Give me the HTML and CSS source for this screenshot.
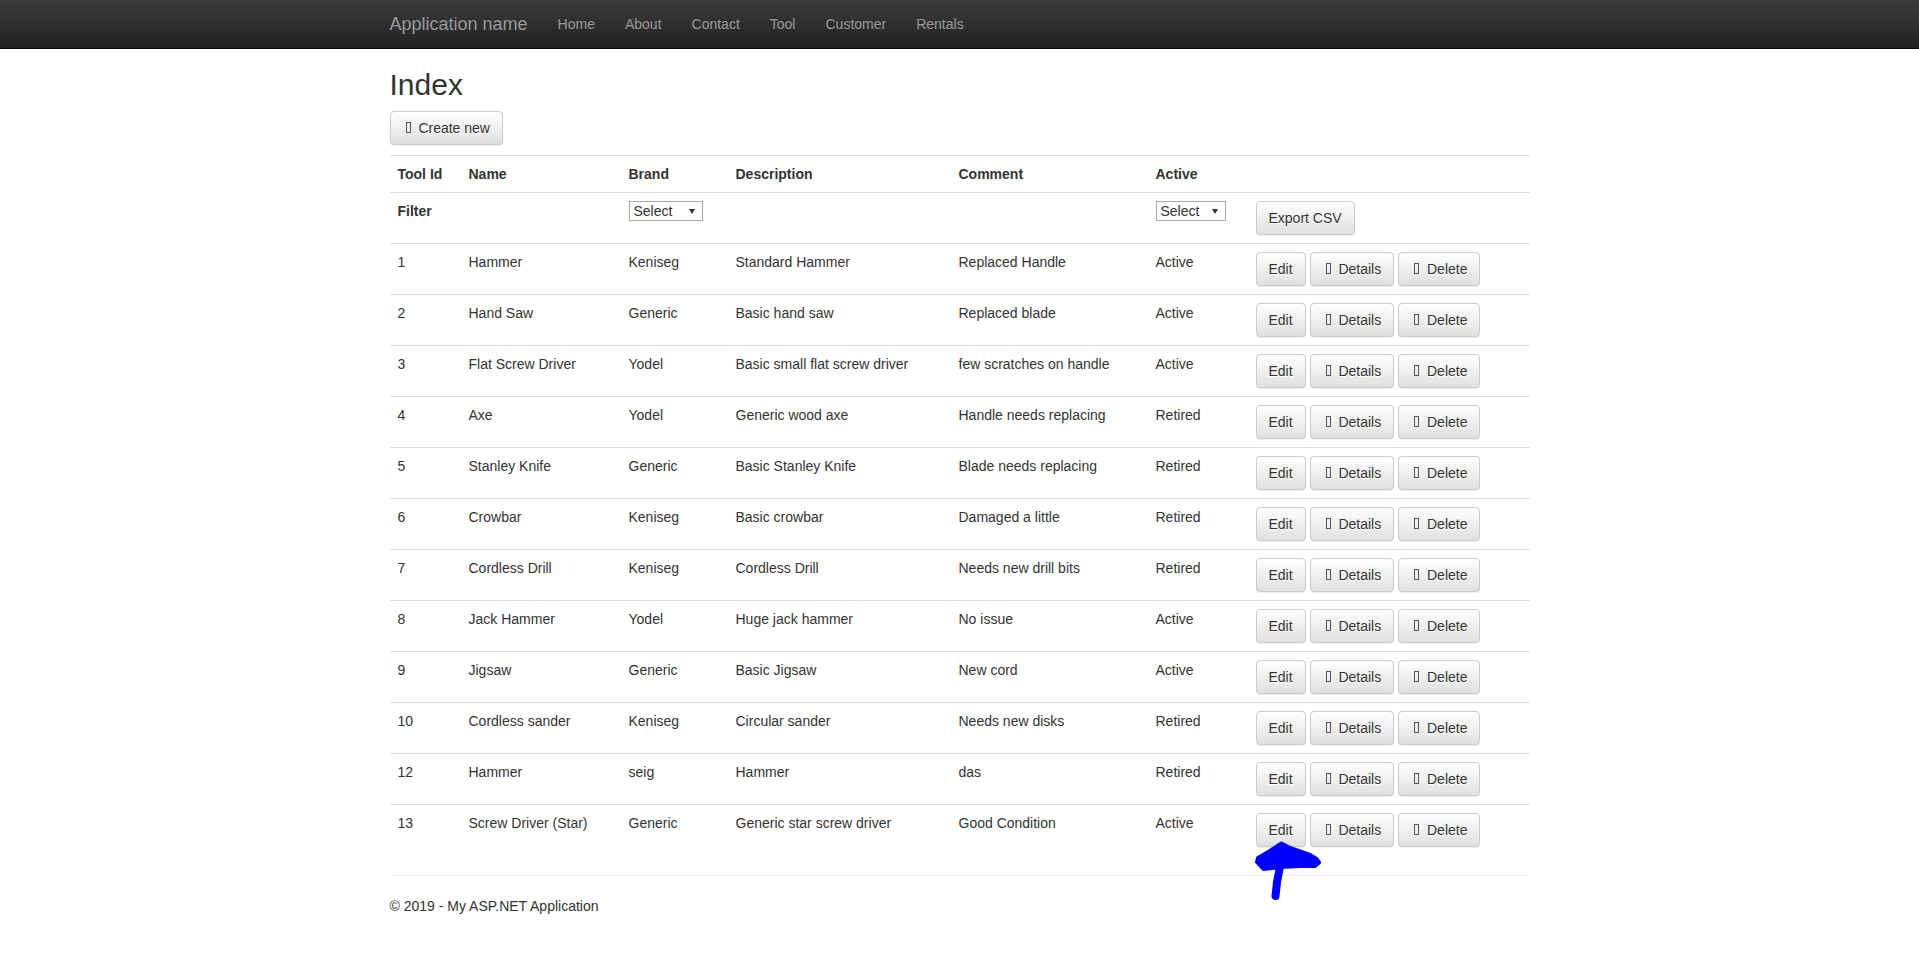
FILE: index.html
```html
<!DOCTYPE html>
<html lang="en">
<head>
<meta charset="utf-8">
<title>Index - My ASP.NET Application</title>
<link rel="stylesheet" href="styles.css">
</head>
<body>
<header class="navbar">
  <div class="container nav-inner">
    <a class="brand" href="#">Application name</a>
    <ul class="nav">
      <li><a href="#">Home</a></li>
      <li><a href="#">About</a></li>
      <li><a href="#">Contact</a></li>
      <li><a href="#">Tool</a></li>
      <li><a href="#">Customer</a></li>
      <li><a href="#">Rentals</a></li>
    </ul>
  </div>
</header>
<main class="container body-content">
  <h2 class="title">Index</h2>
  <p class="actions-top"><a class="btn" href="#"><span class="gi"></span> Create new</a></p>
  <table class="table">
    <colgroup>
      <col class="c-id"><col class="c-name"><col class="c-brand"><col class="c-desc"><col class="c-comment"><col class="c-active"><col class="c-act">
    </colgroup>
    <tbody>
      <tr><th>Tool Id</th><th>Name</th><th>Brand</th><th>Description</th><th>Comment</th><th>Active</th><th></th></tr>
      <tr>
        <th>Filter</th><th></th>
        <th><span class="sel sel-brand"><select><option>Select</option><option>Keniseg</option><option>Generic</option><option>Yodel</option></select></span></th>
        <th></th><th></th>
        <th><span class="sel sel-active"><select><option>Select</option><option>Active</option><option>Retired</option></select></span></th>
        <th><a class="btn" href="#">Export CSV</a></th>
      </tr>
      <tr><td>1</td><td>Hammer</td><td>Keniseg</td><td>Standard Hammer</td><td>Replaced Handle</td><td>Active</td><td><a class="btn" href="#">Edit</a> <a class="btn" href="#"><span class="gi"></span> Details</a> <a class="btn" href="#"><span class="gi"></span> Delete</a></td></tr>
      <tr><td>2</td><td>Hand Saw</td><td>Generic</td><td>Basic hand saw</td><td>Replaced blade</td><td>Active</td><td><a class="btn" href="#">Edit</a> <a class="btn" href="#"><span class="gi"></span> Details</a> <a class="btn" href="#"><span class="gi"></span> Delete</a></td></tr>
      <tr><td>3</td><td>Flat Screw Driver</td><td>Yodel</td><td>Basic small flat screw driver</td><td>few scratches on handle</td><td>Active</td><td><a class="btn" href="#">Edit</a> <a class="btn" href="#"><span class="gi"></span> Details</a> <a class="btn" href="#"><span class="gi"></span> Delete</a></td></tr>
      <tr><td>4</td><td>Axe</td><td>Yodel</td><td>Generic wood axe</td><td>Handle needs replacing</td><td>Retired</td><td><a class="btn" href="#">Edit</a> <a class="btn" href="#"><span class="gi"></span> Details</a> <a class="btn" href="#"><span class="gi"></span> Delete</a></td></tr>
      <tr><td>5</td><td>Stanley Knife</td><td>Generic</td><td>Basic Stanley Knife</td><td>Blade needs replacing</td><td>Retired</td><td><a class="btn" href="#">Edit</a> <a class="btn" href="#"><span class="gi"></span> Details</a> <a class="btn" href="#"><span class="gi"></span> Delete</a></td></tr>
      <tr><td>6</td><td>Crowbar</td><td>Keniseg</td><td>Basic crowbar</td><td>Damaged a little</td><td>Retired</td><td><a class="btn" href="#">Edit</a> <a class="btn" href="#"><span class="gi"></span> Details</a> <a class="btn" href="#"><span class="gi"></span> Delete</a></td></tr>
      <tr><td>7</td><td>Cordless Drill</td><td>Keniseg</td><td>Cordless Drill</td><td>Needs new drill bits</td><td>Retired</td><td><a class="btn" href="#">Edit</a> <a class="btn" href="#"><span class="gi"></span> Details</a> <a class="btn" href="#"><span class="gi"></span> Delete</a></td></tr>
      <tr><td>8</td><td>Jack Hammer</td><td>Yodel</td><td>Huge jack hammer</td><td>No issue</td><td>Active</td><td><a class="btn" href="#">Edit</a> <a class="btn" href="#"><span class="gi"></span> Details</a> <a class="btn" href="#"><span class="gi"></span> Delete</a></td></tr>
      <tr><td>9</td><td>Jigsaw</td><td>Generic</td><td>Basic Jigsaw</td><td>New cord</td><td>Active</td><td><a class="btn" href="#">Edit</a> <a class="btn" href="#"><span class="gi"></span> Details</a> <a class="btn" href="#"><span class="gi"></span> Delete</a></td></tr>
      <tr><td>10</td><td>Cordless sander</td><td>Keniseg</td><td>Circular sander</td><td>Needs new disks</td><td>Retired</td><td><a class="btn" href="#">Edit</a> <a class="btn" href="#"><span class="gi"></span> Details</a> <a class="btn" href="#"><span class="gi"></span> Delete</a></td></tr>
      <tr><td>12</td><td>Hammer</td><td>seig</td><td>Hammer</td><td>das</td><td>Retired</td><td><a class="btn" href="#">Edit</a> <a class="btn" href="#"><span class="gi"></span> Details</a> <a class="btn" href="#"><span class="gi"></span> Delete</a></td></tr>
      <tr><td>13</td><td>Screw Driver (Star)</td><td>Generic</td><td>Generic star screw driver</td><td>Good Condition</td><td>Active</td><td><a class="btn" href="#">Edit</a> <a class="btn" href="#"><span class="gi"></span> Details</a> <a class="btn" href="#"><span class="gi"></span> Delete</a></td></tr>
    </tbody>
  </table>
  <hr class="rule">
  <footer class="footer">
    <p>&copy; 2019 - My ASP.NET Application</p>
  </footer>
</main>
<svg class="scribble" viewBox="1240 830 100 80" width="100" height="80" aria-hidden="true">
  <path d="M1258 858 L1270 851 L1281.5 843.5 L1290 848 L1300 851.5 L1310 855 L1316.5 859 L1319 862.5 L1315 866 L1300 866 L1280 867 L1263.5 869 L1257 862 Z" fill="#0000ff" stroke="#0000ff" stroke-width="4" stroke-linejoin="round"/>
  <path d="M1280.5 864 L1277 882 L1275.5 896" fill="none" stroke="#0000ff" stroke-width="8" stroke-linecap="round" stroke-linejoin="round"/>
</svg>
</body>
</html>
```

FILE: styles.css
```css
* { box-sizing: border-box; }
html, body { margin: 0; padding: 0; }
body {
  font-family: "Liberation Sans", Arial, Helvetica, sans-serif;
  font-size: 14px;
  line-height: 20px;
  color: #333;
  background: #fff;
}
a { text-decoration: none; }

.container {
  width: 1170px;
  margin: 0 auto;
  padding: 0 15px;
}

/* navbar */
.navbar {
  height: 49px;
  background: linear-gradient(to bottom, #3c3c3c 0, #222 100%);
  border-bottom: 1px solid #080808;
}
.nav-inner {
  display: flex;
  align-items: center;
  height: 47px;
}
.brand {
  font-size: 18px;
  line-height: 20px;
  color: #9d9d9d;
  padding: 0 15px;
  margin-left: -15px;
  text-shadow: 0 -1px 0 rgba(0,0,0,.25);
}
.nav {
  display: flex;
  list-style: none;
  margin: 0;
  padding: 0;
}
.nav a {
  display: block;
  padding: 0 15px;
  line-height: 20px;
  color: #9d9d9d;
  text-shadow: 0 -1px 0 rgba(0,0,0,.25);
}

/* content */
.title {
  font-size: 30px;
  font-weight: 500;
  line-height: 1.1;
  margin: 19px 0 10px;
  color: #333;
}
.actions-top { margin: 0 0 10px; }

.btn {
  display: inline-block;
  padding: 6px 12px;
  font-size: 14px;
  line-height: 20px;
  color: #333;
  white-space: nowrap;
  vertical-align: middle;
  border: 1px solid #ccc;
  border-radius: 4px;
  background-color: #e0e0e0;
  background-image: linear-gradient(to bottom, #fff 0, #e0e0e0 100%);
  text-shadow: 0 1px 0 #fff;
  box-shadow: inset 0 1px 0 rgba(255,255,255,.15), 0 1px 1px rgba(0,0,0,.075);
  font-weight: normal;
}
.gi {
  display: inline-block;
  width: 5px;
  height: 11px;
  border: 1px solid #555;
  margin-left: 3px;
  margin-right: 4px;
}

.table {
  width: 100%;
  table-layout: fixed;
  border-collapse: collapse;
  border-spacing: 0;
  margin-bottom: 20px;
}
.c-id { width: 71px; }
.c-name { width: 160px; }
.c-brand { width: 107px; }
.c-desc { width: 223px; }
.c-comment { width: 197px; }
.c-active { width: 100px; }
.c-act { width: 282px; }
.table th, .table td {
  padding: 8px;
  line-height: 20px;
  vertical-align: top;
  text-align: left;
  border-top: 1px solid #ddd;
  white-space: nowrap;
}
.table th { font-weight: bold; }

.sel {
  position: relative;
  display: inline-block;
}
.sel select {
  -webkit-appearance: none;
  appearance: none;
  height: 20px;
  padding: 0 0 0 4px;
  font-family: inherit;
  font-size: 14px;
  font-weight: normal;
  line-height: 18px;
  color: #333;
  background: #fff;
  border: 1px solid #a9a9a9;
  border-radius: 0;
  margin: 0;
}
.sel-brand select { width: 74px; }
.sel-active select { width: 70px; }
.sel::after {
  content: "";
  position: absolute;
  right: 8px;
  top: 8px;
  border-left: 3px solid transparent;
  border-right: 3px solid transparent;
  border-top: 5px solid #333;
  pointer-events: none;
}

.rule {
  margin: 20px 0;
  border: 0;
  border-top: 1px solid #eee;
  height: 0;
}
.footer p { margin: 0 0 10px; }

.scribble {
  position: absolute;
  left: 1240px;
  top: 830px;
}
```
